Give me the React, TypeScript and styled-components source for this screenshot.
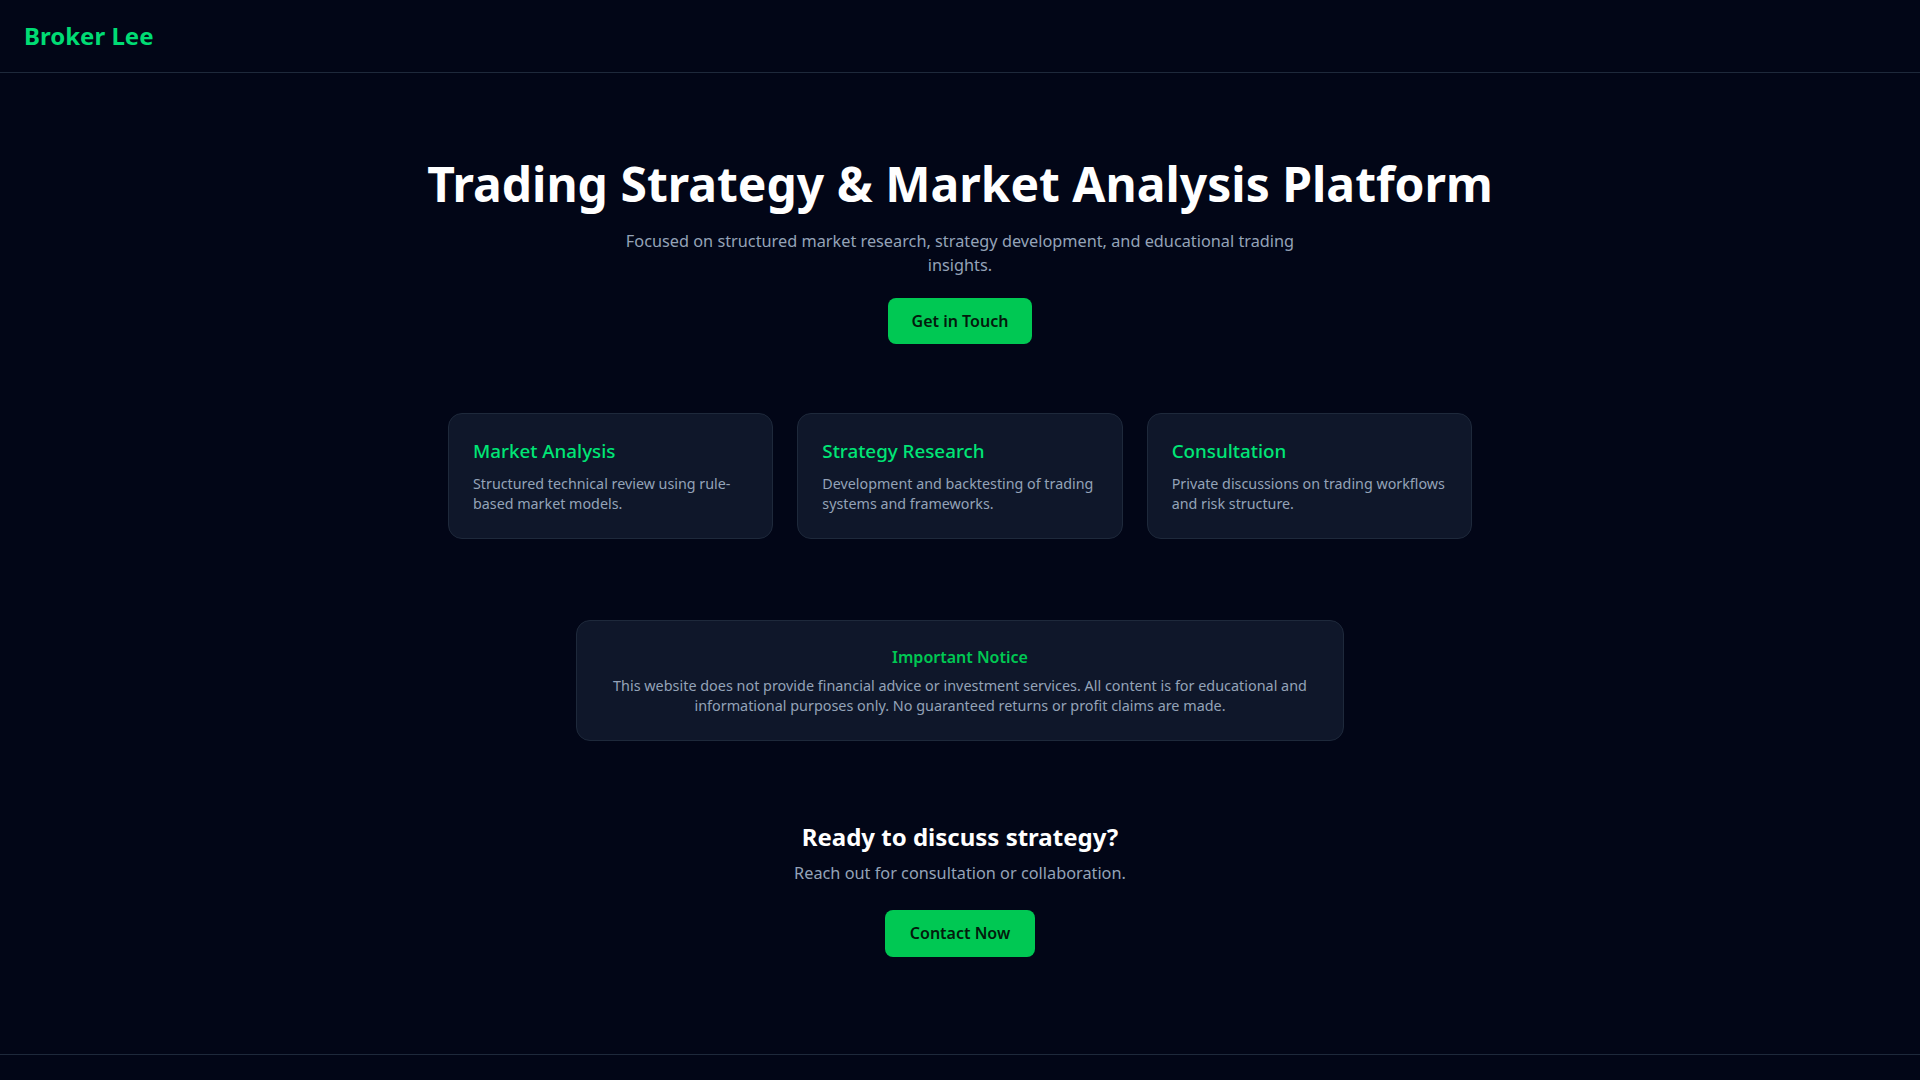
import styled, { createGlobalStyle } from 'styled-components';

const GlobalStyle = createGlobalStyle`
  * {
    box-sizing: border-box;
  }

  body {
    margin: 0;
    background: #020617;
    color: #f8fafc;
    font-family: 'Noto Sans', 'Open Sans', sans-serif;
  }
`;

const services = [
	{
		title: 'Market Analysis',
		text: 'Structured technical review using rule-based market models.',
	},
	{
		title: 'Strategy Research',
		text: 'Development and backtesting of trading systems and frameworks.',
	},
	{
		title: 'Consultation',
		text: 'Private discussions on trading workflows and risk structure.',
	},
];

export default function App(){
	return(
		<>
			<GlobalStyle />
			<Page>
				<Header>
					<Logo>Broker Lee</Logo>
				</Header>

				<Main>
					<Hero>
						<Title>Trading Strategy &amp; Market Analysis Platform</Title>
						<Lead>
              Focused on structured market research, strategy development, and educational trading insights.
						</Lead>
						<Button>Get in Touch</Button>
					</Hero>

					<Cards>
						{services.map(s => (
							<Card key={s.title}>
								<CardTitle>{s.title}</CardTitle>
								<CardText>{s.text}</CardText>
							</Card>
						))}
					</Cards>

					<Notice>
						<NoticeTitle>Important Notice</NoticeTitle>
						<NoticeText>
              This website does not provide financial advice or investment services. All content is for educational and informational purposes only. No guaranteed returns or profit claims are made.
						</NoticeText>
					</Notice>

					<Cta>
						<CtaTitle>Ready to discuss strategy?</CtaTitle>
						<CtaText>Reach out for consultation or collaboration.</CtaText>
						<Button $cta>Contact Now</Button>
					</Cta>
				</Main>

				<Footer />
			</Page>
		</>
	);
}

const Page = styled.div`
  min-height: 100vh;
  display: flex;
  flex-direction: column;
`;

const Header = styled.header`
  height: 73px;
  padding: 0 24px;
  display: flex;
  align-items: center;
  border-bottom: 1px solid #1e293b;
`;

const Logo = styled.div`
  font-size: 24px;
  font-weight: 700;
  color: #00dc74;
  padding-bottom: 2px;
`;

const Main = styled.main`
  display: flex;
  flex-direction: column;
  align-items: center;
  padding: 82px 24px 97px;
`;

const Hero = styled.section`
  display: flex;
  flex-direction: column;
  align-items: center;
  text-align: center;
`;

const Title = styled.h1`
  margin: 0;
  font-size: 48px;
  line-height: 1.2;
  font-weight: 700;
  color: #ffffff;
`;

const Lead = styled.p`
  margin: 16px 0 0;
  max-width: 690px;
  font-size: 16.3px;
  line-height: 24px;
  color: #94a3b8;
`;

const Button = styled.button<{ $cta?: boolean }>`
  margin-top: ${props => props.$cta ? '25px' : '21px'};
  height: ${props => props.$cta ? '47px' : '46px'};
  padding: 0 ${props => props.$cta ? '25px' : '24px'};
  border: none;
  border-radius: 8px;
  background: #00c853;
  color: #031a0c;
  font-family: inherit;
  font-size: 16px;
  font-weight: 600;
  cursor: pointer;

  &:hover{
    background: #00b34a;
  }
`;

const Cards = styled.section`
  width: 100%;
  max-width: 1024px;
  margin-top: 69px;
  display: grid;
  grid-template-columns: repeat(3, 1fr);
  gap: 24px;
`;

const Card = styled.div`
  padding: 24px;
  background: #0f172a;
  border: 1px solid #1e293b;
  border-radius: 14px;
`;

const CardTitle = styled.h3`
  margin: 0 0 9px;
  font-size: 18.8px;
  line-height: 27px;
  font-weight: 500;
  color: #00e676;
`;

const CardText = styled.p`
  margin: 0;
  font-size: 14.3px;
  line-height: 20px;
  color: #94a3b8;
`;

const Notice = styled.section`
  width: 100%;
  max-width: 768px;
  margin-top: 81px;
  padding: 24px 28px;
  background: #0f172a;
  border: 1px solid #1e293b;
  border-radius: 14px;
  text-align: center;
`;

const NoticeTitle = styled.h4`
  margin: 0 0 7px;
  font-size: 16px;
  line-height: 24px;
  font-weight: 600;
  color: #00c853;
`;

const NoticeText = styled.p`
  margin: 0;
  font-size: 14.4px;
  line-height: 20px;
  color: #94a3b8;
`;

const Cta = styled.section`
  margin-top: 80px;
  display: flex;
  flex-direction: column;
  align-items: center;
  text-align: center;
`;

const CtaTitle = styled.h2`
  margin: 0;
  font-size: 24px;
  line-height: 32px;
  font-weight: 700;
  color: #ffffff;
`;

const CtaText = styled.p`
  margin: 8px 0 0;
  font-size: 16.3px;
  line-height: 24px;
  color: #94a3b8;
`;

const Footer = styled.footer`
  border-top: 1px solid #1e293b;
  height: 80px;
`;
